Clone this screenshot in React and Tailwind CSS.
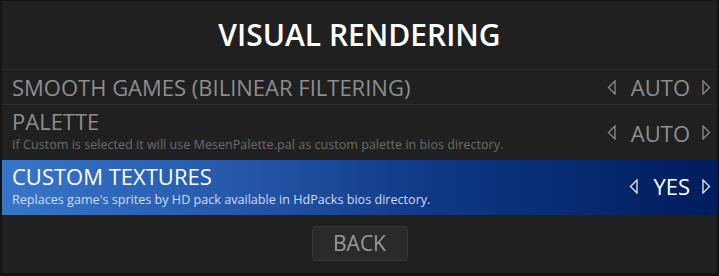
import React from "react";

function ArrowL({ color }) {
  return (
    <svg width="9" height="15" viewBox="0 0 9 15" className="shrink-0">
      <path d="M8 1 L1.5 7.5 L8 14 Z" fill="none" stroke={color} strokeWidth="1.3" strokeLinejoin="miter" />
    </svg>
  );
}
function ArrowR({ color }) {
  return (
    <svg width="9" height="15" viewBox="0 0 9 15" className="shrink-0">
      <path d="M1 1 L7.5 7.5 L1 14 Z" fill="none" stroke={color} strokeWidth="1.3" strokeLinejoin="miter" />
    </svg>
  );
}

function Value({ text, selected }) {
  const c = selected ? "#e8ecf5" : "#8c8c8c";
  return (
    <div className="flex items-center">
      <ArrowL color={c} />
      <span className={`ml-[15px] mr-[12px] text-[22px] leading-none ${selected ? "text-white" : "text-[#8e8e8e]"}`}>{text}</span>
      <ArrowR color={c} />
    </div>
  );
}

export default function App() {
  return (
    <div className="w-[719px] h-[276px] bg-[#141414] pl-[2px] pr-[2px] pt-[1px] pb-[3px]" style={{ fontFamily: '"Open Sans", "Noto Sans", sans-serif' }}>
      <div className="w-full h-full bg-[#202020] flex flex-col">
        <div className="h-[68px] flex items-center justify-center">
          <h1 className="text-[30px] font-semibold text-white leading-none">VISUAL RENDERING</h1>
        </div>
        <div className="h-[35px] border-t border-[#2c2c2c] flex items-center justify-between pl-[10px] pr-[6px]">
          <span className="text-[22px] leading-none text-[#8e8e8e]">SMOOTH GAMES (BILINEAR FILTERING)</span>
          <Value text="AUTO" />
        </div>
        <div className="h-[56px] border-t border-[#2c2c2c] flex items-center justify-between pl-[10px] pr-[6px]">
          <div className="flex flex-col -mt-[4px]">
            <span className="text-[22px] leading-none text-[#8e8e8e]">PALETTE</span>
            <span className="text-[12.6px] leading-none text-[#6c6c6c] mt-[7px]">If Custom is selected it will use MesenPalette.pal as custom palette in bios directory.</span>
          </div>
          <Value text="AUTO" />
        </div>
        <div className="h-[55px] flex items-center justify-between pl-[10px] pr-[6px] bg-[linear-gradient(90deg,#3676c9_0%,#2555a8_35%,#103886_60%,#072a70_80%,#001c5c_100%)]">
          <div className="flex flex-col -mt-[4px]">
            <span className="text-[22px] leading-none text-white">CUSTOM TEXTURES</span>
            <span className="text-[12.6px] leading-none text-[#d4dcef] mt-[7px]">Replaces game's sprites by HD pack available in HdPacks bios directory.</span>
          </div>
          <div className="-mt-[3px]">
            <Value text="YES" selected />
          </div>
        </div>
        <div className="flex-1 flex items-start justify-center pt-[11px]">
          <div className="w-[96px] h-[35px] rounded-[4px] bg-[#2a2a2a] border border-[#363636] flex items-center justify-center text-[21px] text-[#999999] leading-none">BACK</div>
        </div>
      </div>
    </div>
  );
}
